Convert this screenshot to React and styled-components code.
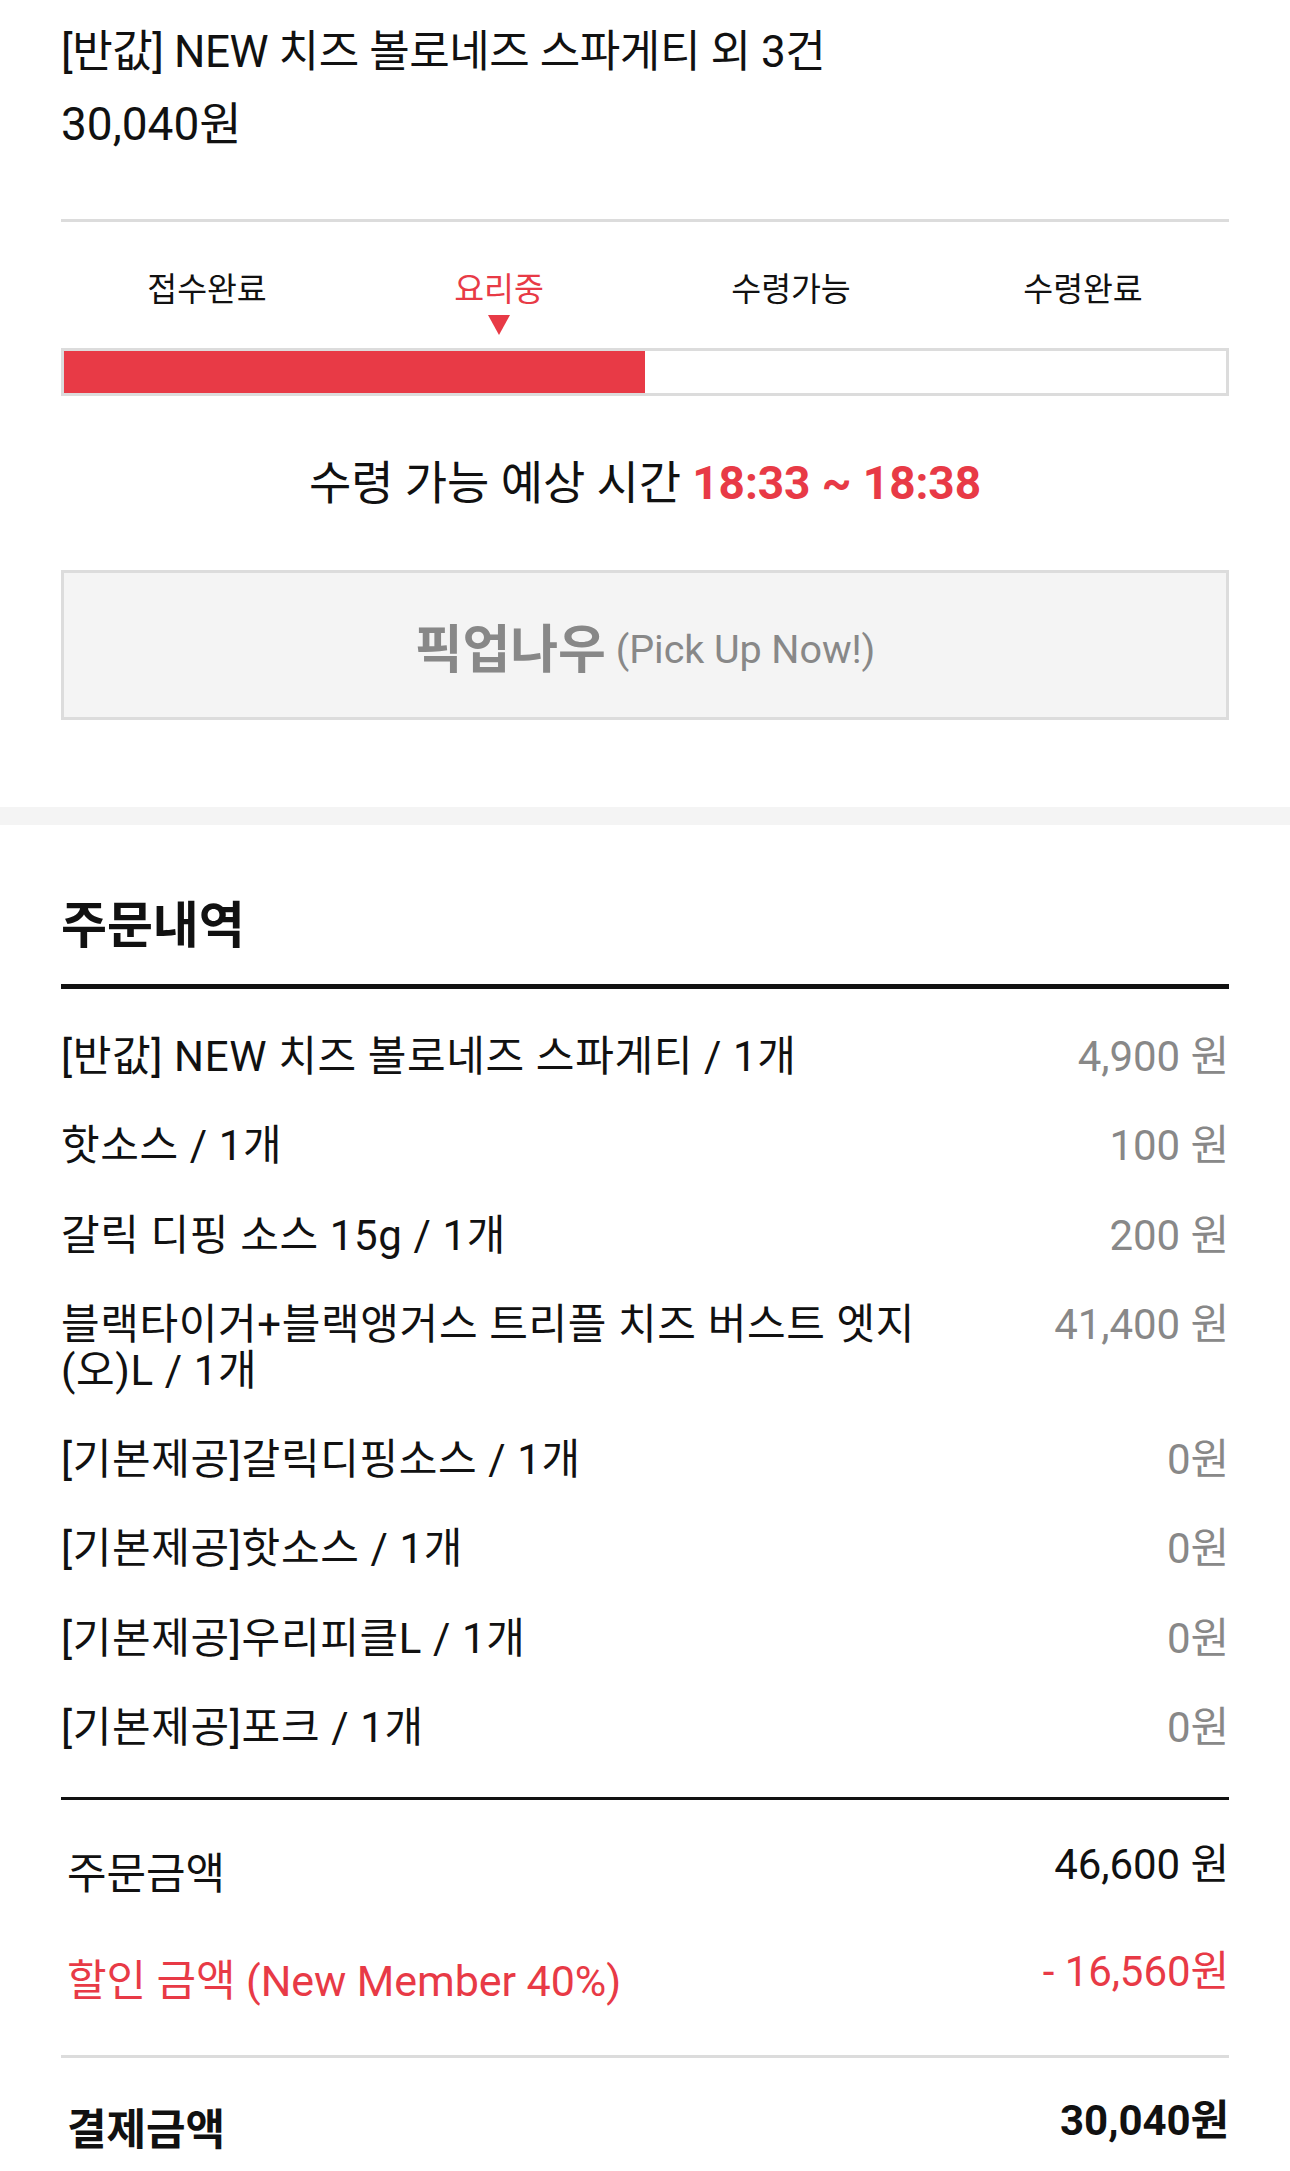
import React from "react";
import styled, { createGlobalStyle } from "styled-components";

const RED = "#e83a46";
const LINE = "#dcdcdc";

const GlobalStyle = createGlobalStyle`
  html, body {
    margin: 0;
    padding: 0;
    background: #fff;
  }
  body {
    font-family: Roboto, "Noto Sans CJK KR", sans-serif;
    color: #111;
    letter-spacing: -0.005em;
  }
`;

const Page = styled.div`
  width: 100%;
  min-height: 2171px;
  background: #fff;
`;

// top status section
const StatusSection = styled.section`
  padding: 16px 61px 87px;
`;

const OrderTitle = styled.div`
  font-size: ${(p) => p.$size || 44}px;
  line-height: 72px;
  letter-spacing: ${(p) => (p.$tight ? "-0.01em" : "0")};
`;

const Divider = styled.div`
  height: ${(p) => p.$h || 3}px;
  background: ${(p) => p.$color || LINE};
  margin-top: ${(p) => p.$mt || 0}px;
`;

const Steps = styled.div`
  display: grid;
  grid-template-columns: repeat(4, 1fr);
  margin-top: 48px;
`;

const Step = styled.div`
  display: flex;
  flex-direction: column;
  align-items: center;
`;

const StepLabel = styled.div`
  font-size: 32.5px;
  line-height: 40px;
  color: ${(p) => (p.$active ? RED : "#111")};
`;

const MarkerSlot = styled.div`
  height: 20px;
  padding-top: 5px;
  display: flex;
  justify-content: center;
`;

const Marker = styled.div`
  width: 0;
  height: 0;
  border-left: 11px solid transparent;
  border-right: 11px solid transparent;
  border-top: 20px solid ${RED};
`;

const ProgressBar = styled.div`
  margin-top: 13px;
  height: 42px;
  border: 3px solid ${LINE};
  background: #fff;
`;

const ProgressFill = styled.div`
  height: 100%;
  background: ${RED};
`;

const Estimate = styled.div`
  margin-top: 57px;
  text-align: center;
  font-size: 46px;
  line-height: 60px;
  color: #111;

  strong {
    color: ${RED};
    font-weight: 700;
  }
`;

const PickupButton = styled.button`
  display: flex;
  width: 100%;
  height: 150px;
  margin-top: 57px;
  align-items: center;
  justify-content: center;
  gap: 10px;
  background: #f4f4f4;
  border: 3px solid ${LINE};
  color: #888;
  font-family: inherit;
  letter-spacing: -0.005em;
  cursor: pointer;
`;

const PickupMain = styled.span`
  font-size: 52px;
  font-weight: 700;
`;

const PickupSub = styled.span`
  font-size: 39.5px;
  padding-top: 8px;
`;

const Band = styled.div`
  height: 18px;
  background: #f4f4f4;
`;

// order detail section
const DetailSection = styled.section`
  padding: 71px 61px 20px;
`;

const SectionHeading = styled.h2`
  margin: 0;
  font-size: 50px;
  line-height: 60px;
  font-weight: 700;
`;

const ItemList = styled.ul`
  list-style: none;
  margin: 0;
  padding: 23px 0 24px;
`;

const ItemRow = styled.li`
  display: flex;
  align-items: flex-start;
  justify-content: space-between;
  padding: 22px 0;
  font-size: 42px;
  line-height: 45.4px;
`;

const ItemName = styled.span`
  flex: 0 0 76%;
  color: #111;
  letter-spacing: 0.015em;
`;

const ItemPrice = styled.span`
  color: #888;
  text-align: right;
  white-space: nowrap;
`;

const Summary = styled.div`
  padding: 16px 0 25px;
`;

const SummaryRow = styled.div`
  display: flex;
  align-items: flex-start;
  justify-content: space-between;
  padding: 26px 0;
  margin-top: ${(p) => p.$mt || 0}px;
  font-size: 42px;
  line-height: 46px;
  color: ${(p) => (p.$red ? RED : "#111")};
`;

const SummaryLabel = styled.span`
  padding: 9px 0 0 6px;
  font-size: 43px;
  font-weight: ${(p) => (p.$bold ? 700 : 400)};
`;

const SummaryValue = styled.span`
  white-space: nowrap;
  font-weight: ${(p) => (p.$bold ? 700 : 400)};
`;

const steps = ["접수완료", "요리중", "수령가능", "수령완료"];
const activeStep = 1;

const items = [
  { name: "[반값] NEW 치즈 볼로네즈 스파게티 / 1개", price: "4,900 원" },
  { name: "핫소스 / 1개", price: "100 원" },
  { name: "갈릭 디핑 소스 15g / 1개", price: "200 원" },
  {
    name: "블랙타이거+블랙앵거스 트리플 치즈 버스트 엣지(오)L / 1개",
    price: "41,400 원",
  },
  { name: "[기본제공]갈릭디핑소스 / 1개", price: "0원" },
  { name: "[기본제공]핫소스 / 1개", price: "0원" },
  { name: "[기본제공]우리피클L / 1개", price: "0원" },
  { name: "[기본제공]포크 / 1개", price: "0원" },
];

export default function App() {
  return (
    <Page>
      <GlobalStyle />
      <StatusSection>
        <OrderTitle $tight>[반값] NEW 치즈 볼로네즈 스파게티 외 3건</OrderTitle>
        <OrderTitle $size={46}>30,040원</OrderTitle>
        <Divider $mt={59} />

        <Steps>
          {steps.map((s, i) => (
            <Step key={s}>
              <StepLabel $active={i === activeStep}>{s}</StepLabel>
              <MarkerSlot>{i === activeStep && <Marker />}</MarkerSlot>
            </Step>
          ))}
        </Steps>
        <ProgressBar>
          <ProgressFill style={{ width: `${((activeStep + 1) / steps.length) * 100}%` }} />
        </ProgressBar>

        <Estimate>
          수령 가능 예상 시간 <strong>18:33 ~ 18:38</strong>
        </Estimate>

        <PickupButton>
          <PickupMain>픽업나우</PickupMain>
          <PickupSub>(Pick Up Now!)</PickupSub>
        </PickupButton>
      </StatusSection>

      <Band />

      <DetailSection>
        <SectionHeading>주문내역</SectionHeading>
        <Divider $h={5} $color="#111" $mt={28} />
        <ItemList>
          {items.map((it) => (
            <ItemRow key={it.name}>
              <ItemName>{it.name}</ItemName>
              <ItemPrice>{it.price}</ItemPrice>
            </ItemRow>
          ))}
        </ItemList>
        <Divider $h={3} $color="#111" />

        <Summary>
          <SummaryRow>
            <SummaryLabel>주문금액</SummaryLabel>
            <SummaryValue>46,600 원</SummaryValue>
          </SummaryRow>
          <SummaryRow $red>
            <SummaryLabel>할인 금액 (New Member 40%)</SummaryLabel>
            <SummaryValue>- 16,560원</SummaryValue>
          </SummaryRow>
        </Summary>
        <Divider $h={3} />
        <SummaryRow $mt={14}>
          <SummaryLabel $bold>결제금액</SummaryLabel>
          <SummaryValue $bold>30,040원</SummaryValue>
        </SummaryRow>
      </DetailSection>
    </Page>
  );
}
